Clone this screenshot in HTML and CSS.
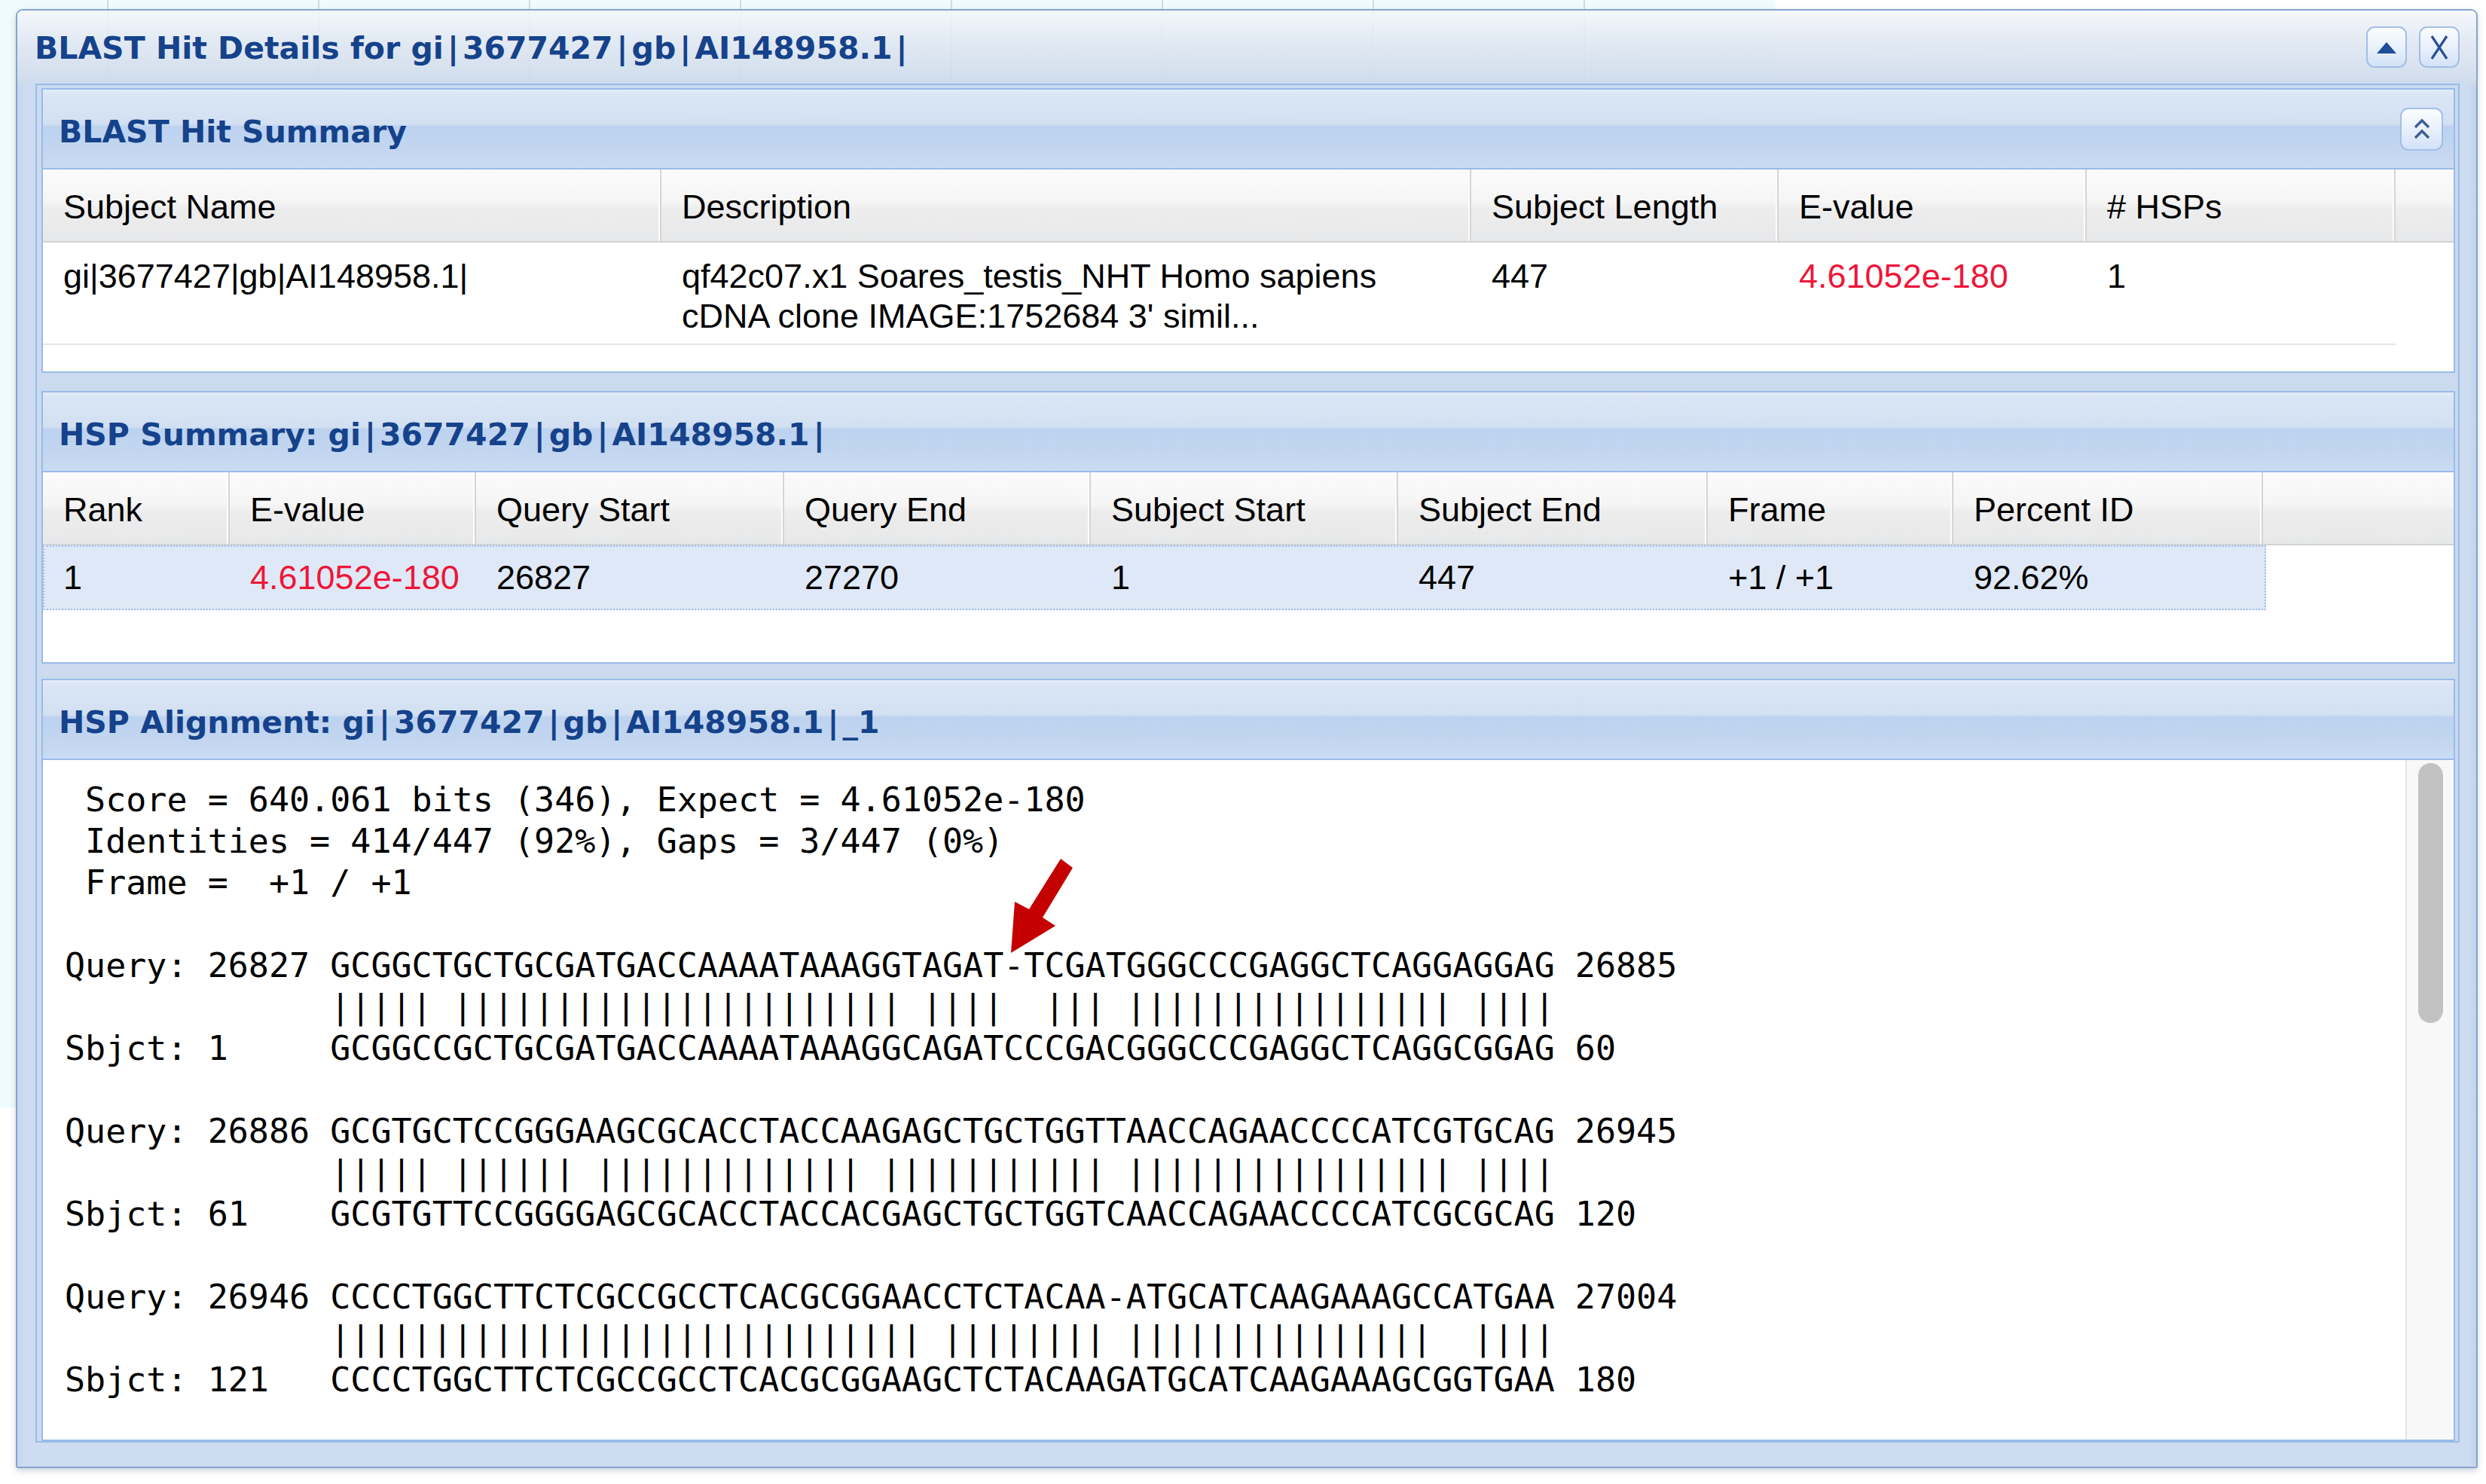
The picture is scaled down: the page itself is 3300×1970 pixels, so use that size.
FILE: index.html
```html
<!DOCTYPE html>
<html>
<head>
<meta charset="utf-8">
<title>BLAST Hit Details</title>
<link rel="stylesheet" href="styles.css">
</head>
<body>
<div class="desk">
  <div class="win">
    <div class="win-head">
      <span class="win-title">BLAST Hit Details for gi<span class="pp">|</span>3677427<span class="pp">|</span>gb<span class="pp">|</span>AI148958.1<span class="pp">|</span></span>
      <div class="tools">
        <button class="tool"><svg width="28" height="16" viewBox="0 0 28 16"><path d="M1 16 L14 1 L27 16Z" fill="#1f4d9b"/></svg></button>
        <button class="tool"><svg width="26" height="34" viewBox="0 0 26 34"><path d="M3 2 L23 32 M23 2 L3 32" stroke="#2b4f93" stroke-width="3.2" fill="none"/></svg></button>
      </div>
    </div>
    <div class="win-main">
      <div class="win-body">

        <section class="panel p1">
          <div class="p-head">
            <span>BLAST Hit Summary</span>
            <button class="tool ptool"><svg width="28" height="34" viewBox="0 0 28 34"><path d="M5 15 L14 6 L23 15 M5 29 L14 20 L23 29" stroke="#3d5f98" stroke-width="3.4" fill="none"/></svg></button>
          </div>
          <div class="grid g1">
            <div class="g-head">
              <div class="hc">Subject Name</div>
              <div class="hc">Description</div>
              <div class="hc">Subject Length</div>
              <div class="hc">E-value</div>
              <div class="hc"># HSPs</div>
              <div class="hc fill"></div>
            </div>
            <div class="g-row r-top">
              <div class="c">gi|3677427|gb|AI148958.1|</div>
              <div class="c">qf42c07.x1 Soares_testis_NHT Homo sapiens<br>cDNA clone IMAGE:1752684 3' simil...</div>
              <div class="c">447</div>
              <div class="c red">4.61052e-180</div>
              <div class="c">1</div>
            </div>
          </div>
        </section>

        <section class="panel p2">
          <div class="p-head">
            <span>HSP Summary: gi<span class="pp">|</span>3677427<span class="pp">|</span>gb<span class="pp">|</span>AI148958.1<span class="pp">|</span></span>
          </div>
          <div class="grid g2">
            <div class="g-head">
              <div class="hc">Rank</div>
              <div class="hc">E-value</div>
              <div class="hc">Query Start</div>
              <div class="hc">Query End</div>
              <div class="hc">Subject Start</div>
              <div class="hc">Subject End</div>
              <div class="hc">Frame</div>
              <div class="hc">Percent ID</div>
              <div class="hc fill"></div>
            </div>
            <div class="g-row sel">
              <div class="c">1</div>
              <div class="c red">4.61052e-180</div>
              <div class="c">26827</div>
              <div class="c">27270</div>
              <div class="c">1</div>
              <div class="c">447</div>
              <div class="c">+1 / +1</div>
              <div class="c">92.62%</div>
            </div>
          </div>
        </section>

        <section class="panel p3">
          <div class="p-head">
            <span>HSP Alignment: gi<span class="pp">|</span>3677427<span class="pp">|</span>gb<span class="pp">|</span>AI148958.1<span class="pp">|</span>_1</span>
          </div>
          <div class="aln">
<pre class="seq">
 Score = 640.061 bits (346), Expect = 4.61052e-180
 Identities = 414/447 (92%), Gaps = 3/447 (0%)
 Frame =  +1 / +1

Query: 26827 GCGGCTGCTGCGATGACCAAAATAAAGGTAGAT-TCGATGGGCCCGAGGCTCAGGAGGAG 26885
             ||||| |||||||||||||||||||||| ||||  ||| |||||||||||||||| ||||
Sbjct: 1     GCGGCCGCTGCGATGACCAAAATAAAGGCAGATCCCGACGGGCCCGAGGCTCAGGCGGAG 60

Query: 26886 GCGTGCTCCGGGAAGCGCACCTACCAAGAGCTGCTGGTTAACCAGAACCCCATCGTGCAG 26945
             ||||| |||||| ||||||||||||| ||||||||||| |||||||||||||||| ||||
Sbjct: 61    GCGTGTTCCGGGGAGCGCACCTACCACGAGCTGCTGGTCAACCAGAACCCCATCGCGCAG 120

Query: 26946 CCCCTGGCTTCTCGCCGCCTCACGCGGAACCTCTACAA-ATGCATCAAGAAAGCCATGAA 27004
             ||||||||||||||||||||||||||||| |||||||| |||||||||||||||  ||||
Sbjct: 121   CCCCTGGCTTCTCGCCGCCTCACGCGGAAGCTCTACAAGATGCATCAAGAAAGCGGTGAA 180
</pre>
            <div class="scroll"><div class="thumb"></div></div>
            <svg class="arrow" width="110" height="145" viewBox="0 0 110 145"><polygon points="78,10 94,22 54,88 71,99 12,135 17,67 36,77" fill="#c40000"/></svg>
          </div>
        </section>

      </div>
    </div>
  </div>
</div>
</body>
</html>
```
FILE: styles.css
```css
* { box-sizing: border-box; }
html, body { margin: 0; padding: 0; }
body {
  width: 3300px;
  height: 1970px;
  overflow: hidden;
  background:
    repeating-linear-gradient(90deg, transparent 0 142px, #d6dada 142px 144px, transparent 144px 280px) 0 0 / 2357px 1470px no-repeat,
    linear-gradient(#effcfd, #effcfd) 0 0 / 2357px 1470px no-repeat,
    #ffffff;
  font-family: "Liberation Sans", Arial, sans-serif;
}
.desk { padding: 12px 0 0 21px; }

.win {
  width: 3268px;
  height: 1937px;
  border: 2px solid #86a3cd;
  border-radius: 9px 9px 3px 3px;
  display: flex;
  flex-direction: column;
  overflow: hidden;
  box-shadow: 0 4px 8px rgba(70, 100, 140, 0.25);
}
.win-head {
  height: 97px;
  flex: none;
  display: flex;
  align-items: center;
  justify-content: space-between;
  padding: 3px 22px 0 23px;
  background: linear-gradient(rgba(244, 247, 252, 0.9), rgba(225, 232, 242, 0.9) 40%, rgba(212, 223, 237, 0.92) 80%, rgba(204, 218, 236, 0.95));
}
.win-title {
  font: bold 41px "DejaVu Sans", Verdana, sans-serif;
  color: #15428b;
  white-space: nowrap;
}
.pp { margin: 0 5px; }
.tools { display: flex; gap: 16px; margin-top: -3px; }
.tool {
  width: 54px;
  height: 55px;
  padding: 0;
  border: 2px solid #a3bee5;
  border-radius: 11px;
  background: linear-gradient(#fbfdff, #e6effb 55%, #d2e2f8);
  display: flex;
  align-items: center;
  justify-content: center;
}
.ptool { width: 57px; height: 57px; margin-top: -8px; }

.win-main {
  flex: 1;
  display: flex;
  padding: 0 22px 32px 24px;
  background: linear-gradient(90deg, #c6d6ec, #cddcf0 10px, #cddcf0 calc(100% - 10px), #c3d3ea);
}
.win-body {
  flex: 1;
  display: flex;
  flex-direction: column;
  border: 2px solid #99bbe8;
  background: #cbdaee;
  padding: 4px 4px 0 6px;
}
.panel {
  border: 2px solid #99bbe8;
  background: #ffffff;
  display: flex;
  flex-direction: column;
  flex: none;
}
.p1 { height: 378px; }
.p2 { height: 362px; margin-top: 24px; }
.p3 { flex: 1; min-height: 0; margin-top: 20px; }

.p-head {
  height: 106px;
  flex: none;
  border-bottom: 2px solid #99bbe8;
  display: flex;
  align-items: center;
  justify-content: space-between;
  padding: 8px 14px 0 21px;
  background: linear-gradient(#e4edf8 0, #dae6f5 6%, #d2e0f2 44%, #bcd2ef 47%, #c2d6f0 75%, #cadcf3 100%);
  color: #15428b;
  font: bold 41px "DejaVu Sans", Verdana, sans-serif;
  white-space: nowrap;
}

.grid { display: flex; flex-direction: column; font-size: 45px; color: #000; }
.g-head {
  display: grid;
  height: 97px;
  background: linear-gradient(#fbfbfb, #f5f5f5 45%, #ededee 55%, #e7e8e9);
  border-bottom: 2px solid #d2d2d2;
}
.g1 .g-head { grid-template-columns: 821px 1075px 408px 409px 410px 1fr; }
.g1 .g-row { grid-template-columns: 821px 1075px 408px 409px 410px; }
.g2 .g-head { grid-template-columns: 248px 327px 409px 407px 408px 411px 326px 411px 1fr; }
.g2 .g-row { grid-template-columns: 248px 327px 409px 407px 408px 411px 326px 411px; }

.hc {
  display: flex;
  align-items: center;
  padding: 4px 0 0 27px;
  border-right: 2px solid #d5d5d5;
  box-shadow: inset -4px 0 0 -2px #fdfdfd;
  white-space: nowrap;
}
.hc.fill { border-right: none; box-shadow: none; }

.g-row { display: grid; width: fit-content; }
.r-top { height: 136px; border-bottom: 2px solid #e6e6e6; }
.r-top .c { padding: 18px 20px 0 27px; line-height: 53px; white-space: nowrap; }

.sel {
  height: 86px;
  background: #dfe8f6;
  border: 2px dotted #a3bae9;
}
.sel .c { display: flex; align-items: center; padding-left: 25px; white-space: nowrap; }
.red { color: #ee1639; }

.aln { flex: 1; display: flex; position: relative; min-height: 0; }
.seq {
  flex: 1;
  margin: 0;
  padding: 25px 0 0 29px;
  font: 45px/55px "DejaVu Sans Mono", "Liberation Mono", monospace;
  color: #000;
  overflow: hidden;
}
.scroll {
  width: 64px;
  flex: none;
  background: #f8f8f8;
  border-left: 2px solid #e6e6e6;
  padding: 4px 0 0 15px;
}
.thumb {
  width: 33px;
  height: 345px;
  background: #c2c2c2;
  border-radius: 17px;
}
.arrow { position: absolute; left: 1273px; top: 121px; }
```
